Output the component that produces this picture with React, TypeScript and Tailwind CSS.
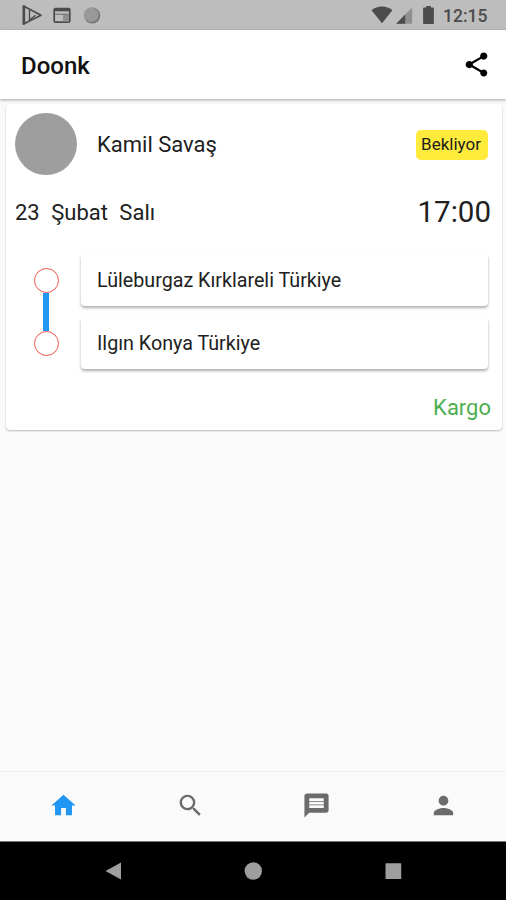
import React from 'react';

interface IconProps {
  path: string;
  className?: string;
}

const icons = {
  share: 'M18 16.08c-.76 0-1.44.3-1.96.77L8.91 12.7c.05-.23.09-.46.09-.7s-.04-.47-.09-.7l7.05-4.11c.54.5 1.25.81 2.04.81 1.66 0 3-1.34 3-3s-1.34-3-3-3-3 1.34-3 3c0 .24.04.47.09.7L8.04 9.81C7.5 9.31 6.79 9 6 9c-1.66 0-3 1.34-3 3s1.34 3 3 3c.79 0 1.5-.31 2.04-.81l7.12 4.16c-.05.21-.08.43-.08.65 0 1.61 1.31 2.92 2.92 2.92s2.92-1.31 2.92-2.92-1.31-2.92-2.92-2.92z',
  home: 'M10 20v-6h4v6h5v-8h3L12 3 2 12h3v8z',
  search: 'M15.5 14h-.79l-.28-.27A6.47 6.47 0 0 0 16 9.5 6.5 6.5 0 1 0 9.5 16c1.61 0 3.09-.59 4.23-1.57l.27.28v.79l5 4.99L20.49 19l-4.99-5zm-6 0C7.01 14 5 11.99 5 9.5S7.01 5 9.5 5 14 7.01 14 9.5 11.99 14 9.5 14z',
  message: 'M20 2H4c-1.1 0-1.99.9-1.99 2L2 22l4-4h14c1.1 0 2-.9 2-2V4c0-1.1-.9-2-2-2zM6 6h12v2.2H6zm0 2.9h12v2.2H6zm0 2.9h12v2.2H6z',
  person: 'M12 12c2.21 0 4-1.79 4-4s-1.79-4-4-4-4 1.79-4 4 1.79 4 4 4zm0 2c-2.67 0-8 1.34-8 4v2h16v-2c0-2.66-5.33-4-8-4z',
};

const stops = ['Lüleburgaz Kırklareli Türkiye', 'Ilgın Konya Türkiye'];

const tabs = [
  { id: 'home', path: icons.home, color: 'text-[#2196f3]' },
  { id: 'search', path: icons.search, color: 'text-[#6b6b6b]' },
  { id: 'messages', path: icons.message, color: 'text-[#6b6b6b]' },
  { id: 'profile', path: icons.person, color: 'text-[#6b6b6b]' },
];

const Icon: React.FC<IconProps> = ({ path, className = '' }) => (
  <svg viewBox="0 0 24 24" fill="currentColor" fillRule="evenodd" className={`size-[29px] ${className}`}>
    <path d={path} />
  </svg>
);

const StatusBar = () => (
  <div className="flex h-[30px] shrink-0 items-center justify-between bg-[#bdbdbd] text-[#4c4c4c]">
    <svg viewBox="0 0 110 30" className="h-[30px] w-[110px]" fill="none" stroke="currentColor">
      <path d="M23.5 6v18L41 15.2z" strokeWidth="1.8" strokeLinejoin="round" />
      <path d="M24 5.5v19" strokeWidth="2.4" />
      <path d="M29.5 10v10l6-4.8" strokeWidth="1.4" />
      <rect x="54.2" y="8.6" width="15.6" height="13.6" rx="1.2" strokeWidth="1.7" />
      <path d="M54 9.8h16" strokeWidth="3" />
      <path d="M55 14.3h14" strokeWidth="1.2" stroke="#777777" />
      <rect x="63" y="15" width="6" height="6.5" fill="#8e8e8e" stroke="none" />
      <circle cx="92.3" cy="15.5" r="8" fill="#777777" stroke="none" />
      <circle cx="91.2" cy="14.7" r="7.3" fill="#999999" stroke="none" />
    </svg>
    <div className="flex items-center">
      <svg viewBox="0 0 80 30" className="h-[30px] w-[80px]" fill="currentColor">
        <path d="M19 23.2 8.6 10.2c3-2.300 6.500-3.600 10.400-3.600s7.400 1.300 10.400 3.600z" />
        <path d="M49.200 7.500v16.300h-16z" fill="#8f8f8f" />
        <path d="M42.200 14.600v9.200h-9z" />
        <path d="M61.200 7.600h2V6h4.600v1.600h2c.6 0 1.100.5 1.100 1.100v14.200c0 .6-.5 1.100-1.100 1.100h-8.600c-.6 0-1.100-.5-1.100-1.100V8.700c0-.6.5-1.100 1.100-1.100z" />
      </svg>
      <span className="mr-[18px] w-[45px] pt-[3px] text-[17.5px] leading-none font-medium whitespace-nowrap">12:15</span>
    </div>
  </div>
);

const Header = () => (
  <header className="z-10 flex h-[69px] shrink-0 items-center justify-between bg-white pr-[15px] pl-[21px] shadow-[0_1px_3px_rgba(0,0,0,0.35)]">
    <h1 className="pt-0.5 text-[24px] font-medium text-[#111111]">Doonk</h1>
    <Icon path={icons.share} className="text-black" />
  </header>
);

const RouteMarkers = () => (
  <div className="flex w-[26px] flex-col items-center">
    <div className="size-[25px] rounded-full border-[1.5px] border-[#f4564c]" />
    <div className="h-[38px] w-1.5 bg-[#2196f3]" />
    <div className="size-[25px] rounded-full border-[1.5px] border-[#f4564c]" />
  </div>
);

const TripCard = () => (
  <section className="mt-[5px] mr-1 ml-1.5 h-[326px] rounded bg-white pt-[9px] shadow-[0_1px_2px_rgba(0,0,0,0.25)]">
    <div className="flex items-center pr-3.5 pl-[9px]">
      <div className="size-[62px] rounded-full bg-[#9e9e9e]" />
      <span className="ml-5 text-[22px]">Kamil Savaş</span>
      <span className="mt-0.5 ml-auto flex h-[30px] w-[72px] items-center justify-center rounded-[5px] bg-[#ffeb3b] pr-0.5 text-[17px]">Bekliyor</span>
    </div>
    <div className="mt-[16px] flex h-[42px] items-center justify-between pr-[11px] pl-[9px]">
      <span className="pt-px text-[22px] [word-spacing:6px]">23 Şubat Salı</span>
      <span className="pt-0.5 text-[29.5px] leading-none">17:00</span>
    </div>
    <div className="mt-[21px] flex items-center pr-3.5 pl-[27px]">
      <RouteMarkers />
      <div className="ml-[22px] flex flex-1 flex-col gap-[11px]">
        {stops.map(stop => (
          <div key={stop} className="flex h-[52px] items-center rounded bg-white pt-0.5 pl-4 text-[19.7px] shadow-[0_2px_3px_rgba(0,0,0,0.32)]">
            {stop}
          </div>
        ))}
      </div>
    </div>
    <p className="mt-[22px] pr-[11px] text-right text-[22px] text-[#4caf50]">Kargo</p>
  </section>
);

const BottomTabs = () => (
  <nav className="mt-auto grid h-[70px] shrink-0 grid-cols-4 items-center border-t border-[#eeeeee] pb-0.5">
    {tabs.map(tab => (
      <div key={tab.id} className="flex justify-center pl-px">
        <Icon path={tab.path} className={tab.color} />
      </div>
    ))}
  </nav>
);

const SystemNav = () => (
  <div className="h-[59px] shrink-0 border-t border-[#777777] bg-black">
    <svg viewBox="0 0 506 58" className="h-[58px] w-full" fill="#9e9e9e">
      <path d="M105.5 29 121 20.5v17z" />
      <circle cx="253.3" cy="29" r="8.7" />
      <rect x="385.5" y="21.3" width="15.7" height="15.7" rx=".5" />
    </svg>
  </div>
);

export default function App() {
  return (
    <div className="flex h-[900px] w-[506px] flex-col overflow-hidden bg-[#fafafa] font-[Roboto,sans-serif] text-[#212121]">
      <StatusBar />
      <Header />
      <TripCard />
      <BottomTabs />
      <SystemNav />
    </div>
  );
}
